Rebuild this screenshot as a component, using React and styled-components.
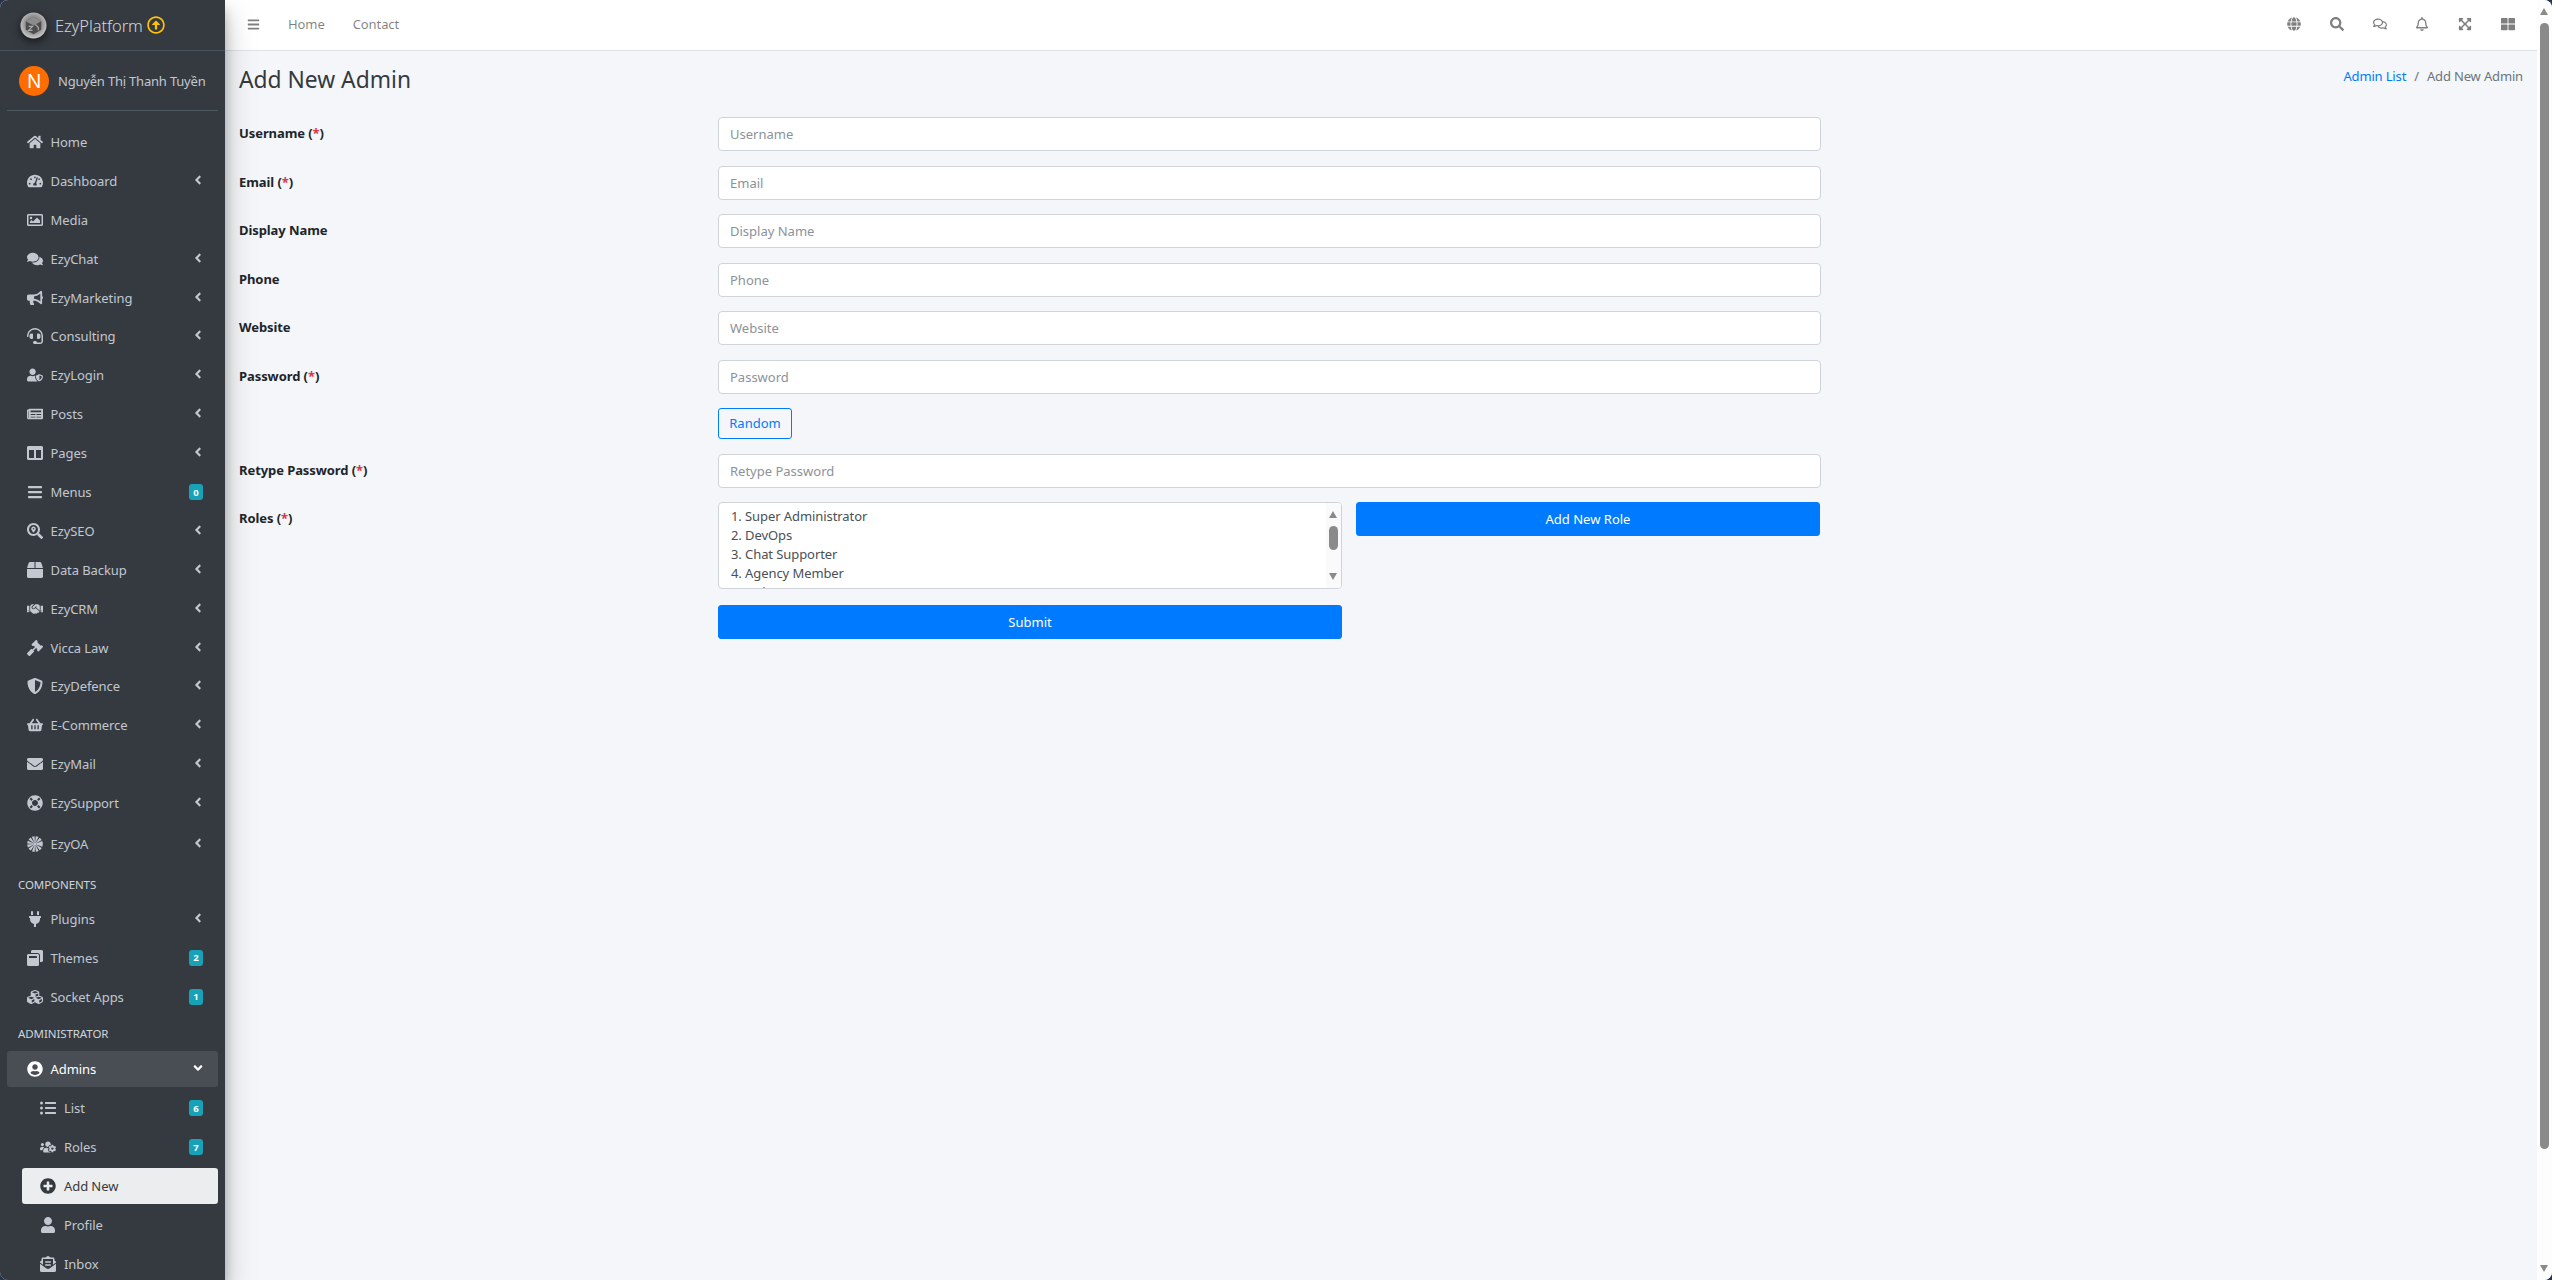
import React from "react";
import styled, { createGlobalStyle } from "styled-components";
import {
  FaHome, FaTachometerAlt, FaRegImage, FaComments, FaBullhorn, FaHeadset, FaUserShield,
  FaNewspaper, FaColumns, FaBars, FaSearchLocation, FaBox, FaHandshake, FaGavel, FaShieldAlt,
  FaShoppingBasket, FaEnvelope, FaLifeRing, FaPlug, FaWindowRestore, FaCubes,
  FaUserCircle, FaListUl, FaUsersCog, FaPlusCircle, FaUser, FaEnvelopeOpenText, FaAngleLeft,
  FaAngleDown, FaGlobe, FaSearch, FaRegComments, FaRegBell, FaExpandArrowsAlt, FaThLarge,
  FaRegArrowAltCircleUp,
} from "react-icons/fa";

const font = `"Noto Sans", "Open Sans", sans-serif`;

const GlobalStyle = createGlobalStyle`
  html, body { margin: 0; height: 100%; overflow: hidden; background: #26344e; }
  body { font-family: ${font}; font-size: 13px; letter-spacing: -.08px; color: #212529; }
  * { box-sizing: border-box; }
`;

const Window = styled.div`
  display: flex;
  width: 2552px;
  height: 1280px;
  overflow: hidden;
  border-radius: 8px;
  background: #f4f6f9;
`;

const Sidebar = styled.aside`
  flex: 0 0 225px;
  height: 1280px;
  overflow: hidden;
  background: #343a40;
  position: relative;
  z-index: 2;
  box-shadow: 0 14px 28px rgba(0, 0, 0, .25), 0 10px 10px rgba(0, 0, 0, .22);
`;

const Brand = styled.div`
  display: flex;
  align-items: center;
  height: 51px;
  padding-left: 20px;
  border-bottom: 1px solid #4b545c;
  color: rgba(255, 255, 255, .8);
  font-size: 16.5px;
  font-weight: 300;
`;

const BrandName = styled.span`
  margin: 0 4px 0 8px;
`;

const UserPanel = styled.div`
  display: flex;
  align-items: center;
  height: 60px;
  margin: 0 7px;
  padding: 0 0 0 12px;
  border-bottom: 1px solid #4f5962;
  color: #c2c7d0;
  letter-spacing: -.2px;
`;

const Avatar = styled.div`
  width: 30px;
  height: 30px;
  border-radius: 50%;
  background: #ff6d00;
  color: #fff;
  font-size: 19px;
  display: flex;
  align-items: center;
  justify-content: center;
  margin-right: 9px;
`;

const Nav = styled.nav`
  padding: 13px 7px 0;
`;

const NavItem = styled.div`
  display: flex;
  align-items: center;
  height: ${p => (p.$tall ? 40 : 36)}px;
  margin-bottom: 2.9px;
  margin-left: ${p => (p.$sub ? 15 : 0)}px;
  padding-left: ${p => (p.$sub ? 14.5 : 16)}px;
  padding-right: 15px;
  border-radius: 3px;
  color: ${p => (p.$current ? "#343a40" : p.$open ? "#fff" : "#c2c7d0")};
  background: ${p => (p.$current ? "#ecedee" : p.$open ? "rgba(255,255,255,.1)" : "transparent")};
`;

const IconSlot = styled.span`
  flex: 0 0 27px;
  display: flex;
  justify-content: center;
  margin-right: 2.5px;
  margin-left: -2px;
  font-size: 16px;
  & svg { width: auto; height: 1em; }
`;

const ItemLabel = styled.span`
  flex: 1;
  white-space: nowrap;
`;

const Badge = styled.span`
  width: 14px;
  height: 16px;
  border-radius: 3px;
  background: #17a2b8;
  color: #fff;
  font-size: 9.5px;
  font-weight: 700;
  display: flex;
  align-items: center;
  justify-content: center;
`;

const Chevron = styled.span`
  display: flex;
  margin: -2px -2px 0 0;
  font-size: 14px;
`;

const NavHeader = styled.div`
  height: 24px;
  margin-top: ${p => p.$top}px;
  margin-bottom: ${p => p.$bottom}px;
  padding-left: 11px;
  font-size: 11.5px;
  color: #d0d4db;
  line-height: 24px;
`;

const Main = styled.div`
  flex: 1;
  min-width: 0;
  display: flex;
  flex-direction: column;
`;

const TopBar = styled.header`
  height: 51px;
  display: flex;
  align-items: center;
  background: #fff;
  border-bottom: 1px solid #dee2e6;
  padding: 0 7.6px 2px 22px;
  color: rgba(0, 0, 0, .5);
`;

const TopLink = styled.span`
  margin-left: ${p => p.$gap}px;
`;

const TopIcons = styled.div`
  margin-left: auto;
  display: flex;
  align-items: center;
`;

const TopIcon = styled.span`
  flex: 0 0 42.8px;
  display: flex;
  justify-content: center;
  font-size: 14px;
  & svg { display: block; width: auto; height: 1em; }
`;

const Content = styled.main`
  padding: 0 14px 0 14px;
`;

const TitleRow = styled.div`
  display: flex;
  justify-content: space-between;
  height: 66px;
`;

const Title = styled.h1`
  margin: 11px 0 0;
  font-size: 22.8px;
  font-weight: 400;
  line-height: 36px;
  letter-spacing: 0;
  color: #343a40;
`;

const Crumbs = styled.div`
  margin-top: 16px;
  color: #6c757d;
  letter-spacing: -.15px;
  & a { color: #007bff; }
  & i { font-style: normal; padding: 0 8px; }
`;

const Row = styled.div`
  display: flex;
  margin-bottom: 14.6px;
`;

const Label = styled.label`
  flex: 0 0 479px;
  font-weight: 700;
  line-height: 32px;
  & em { font-style: normal; color: #dc3545; }
`;

const Field = styled.div`
  width: 1103px;
`;

const Input = styled.input`
  display: block;
  width: 100%;
  height: 34px;
  padding: 0 11px;
  font: 13px ${font};
  color: #495057;
  background: #fff;
  border: 1px solid #ced4da;
  border-radius: 4px;
  &::placeholder { color: #8b9299; opacity: 1; }
`;

const Button = styled.button`
  display: block;
  height: ${p => (p.$outline ? 31 : 34)}px;
  width: ${p => (p.$outline ? "74px" : "100%")};
  margin-top: ${p => (p.$outline ? 14 : 0)}px;
  padding: 0;
  font: 13px ${font};
  color: ${p => (p.$outline ? "#007bff" : "#fff")};
  background: ${p => (p.$outline ? "transparent" : "#007bff")};
  border: 1px solid #007bff;
  border-radius: 3px;
`;

const RoleGrid = styled.div`
  display: grid;
  grid-template-columns: 624px 464px;
  column-gap: 14px;
  align-items: start;
  row-gap: 15.5px;
`;

const RoleBox = styled.div`
  height: 87px;
  overflow: hidden;
  display: flex;
  background: #fff;
  border: 1px solid #ced4da;
  border-radius: 4px;
  color: #495057;
`;

const RoleList = styled.div`
  flex: 1;
  padding: 4px 0 0 12px;
  line-height: 19px;
`;

const MiniBar = styled.div`
  flex: 0 0 15px;
  position: relative;
  background: #fafafa;
`;

const MiniThumb = styled.div`
  position: absolute;
  top: 23px;
  left: 3px;
  width: 9px;
  height: 24px;
  border-radius: 5px;
  background: #8a8a8a;
`;

const Arrow = styled.div`
  position: absolute;
  left: 3px;
  ${p => (p.$up ? "top: 8px;" : "bottom: 8px;")}
  width: 0;
  height: 0;
  border-left: 4.5px solid transparent;
  border-right: 4.5px solid transparent;
  ${p => (p.$up ? "border-bottom" : "border-top")}: 7px solid #8a8a8a;
`;

const PageBar = styled.div`
  flex: 0 0 15px;
  position: relative;
  background: #fdfdfd;
`;

const PageThumb = styled.div`
  position: absolute;
  top: 23px;
  left: 3px;
  width: 9px;
  height: 1126px;
  border-radius: 5px;
  background: #8a8a8a;
`;

const OaIcon = () => (
  <svg viewBox="0 0 16 16" fill="none" stroke="currentColor" strokeWidth="1.5">
    <circle cx="8" cy="8" r="4.6" strokeWidth="6.4" strokeDasharray="1.7 .7" />
    <circle cx="8" cy="8" r="1.6" fill="currentColor" stroke="none" />
  </svg>
);

const nav = [
  [FaHome, "Home"], [FaTachometerAlt, "Dashboard", 1], [FaRegImage, "Media"],
  [FaComments, "EzyChat", 1], [FaBullhorn, "EzyMarketing", 1], [FaHeadset, "Consulting", 1],
  [FaUserShield, "EzyLogin", 1], [FaNewspaper, "Posts", 1], [FaColumns, "Pages", 1],
  [FaBars, "Menus", 0, "0"], [FaSearchLocation, "EzySEO", 1], [FaBox, "Data Backup", 1],
  [FaHandshake, "EzyCRM", 1], [FaGavel, "Vicca Law", 1], [FaShieldAlt, "EzyDefence", 1],
  [FaShoppingBasket, "E-Commerce", 1], [FaEnvelope, "EzyMail", 1], [FaLifeRing, "EzySupport", 1],
];

const components = [
  [FaPlug, "Plugins", 1], [FaWindowRestore, "Themes", 0, "2"], [FaCubes, "Socket Apps", 0, "1"],
];

const subItems = [
  [FaListUl, "List", "6"], [FaUsersCog, "Roles", "7"], [FaPlusCircle, "Add New", null, true],
  [FaUser, "Profile"], [FaEnvelopeOpenText, "Inbox"],
];

const fields = [
  ["Username", "Username", true], ["Email", "Email", true], ["Display Name", "Display Name"],
  ["Phone", "Phone"], ["Website", "Website"],
];

const topIcons = [FaGlobe, FaSearch, FaRegComments, FaRegBell, FaExpandArrowsAlt, FaThLarge];

const Logo = () => (
  <svg width="27" height="27" viewBox="0 0 28 28" style={{ filter: "drop-shadow(0 3px 4px rgba(0,0,0,.6))" }}>
    <defs>
      <radialGradient id="logoBall" cx="50%" cy="45%" r="55%">
        <stop offset="55%" stopColor="#8f8f8f" />
        <stop offset="100%" stopColor="#c9c9c9" />
      </radialGradient>
    </defs>
    <circle cx="14" cy="14" r="13.5" fill="url(#logoBall)" />
    <path d="M14 5l8 4.5v9L14 23l-8-4.5v-9z" fill="#4d4d4d" />
    <path d="M14 5l8 4.5-8 4.5-8-4.5z" fill="#8c8c8c" />
    <path d="M9 15h4l-4 4h4M16 13l3 3v3" fill="none" stroke="#aaa" strokeWidth="1.3" />
  </svg>
);

const MenuRow = ({ icon: Icon, label, arrow, badge, tall }) => (
  <NavItem $tall={tall}>
    <IconSlot><Icon /></IconSlot>
    <ItemLabel>{label}</ItemLabel>
    {badge && <Badge>{badge}</Badge>}
    {arrow ? <Chevron><FaAngleLeft /></Chevron> : null}
  </NavItem>
);

const Required = () => <> (<em>*</em>)</>;

export default function App() {
  return (
    <Window>
      <GlobalStyle />
      <Sidebar>
        <Brand>
          <Logo />
          <BrandName>EzyPlatform</BrandName>
          <FaRegArrowAltCircleUp color="#ffc107" size={18} />
        </Brand>
        <UserPanel>
          <Avatar>N</Avatar>
          Nguyễn Thị Thanh Tuyền
        </UserPanel>
        <Nav>
          {nav.map(([icon, label, arrow, badge]) => (
            <MenuRow key={label} icon={icon} label={label} arrow={arrow} badge={badge} />
          ))}
          <MenuRow icon={OaIcon} label="EzyOA" arrow tall />
          <NavHeader $top={9} $bottom={4}>COMPONENTS</NavHeader>
          {components.map(([icon, label, arrow, badge]) => (
            <MenuRow key={label} icon={icon} label={label} arrow={arrow} badge={badge} />
          ))}
          <NavHeader $top={7.5} $bottom={5}>ADMINISTRATOR</NavHeader>
          <NavItem $open>
            <IconSlot><FaUserCircle /></IconSlot>
            <ItemLabel>Admins</ItemLabel>
            <Chevron><FaAngleDown /></Chevron>
          </NavItem>
          {subItems.map(([Icon, label, badge, current]) => (
            <NavItem key={label} $sub $current={current}>
              <IconSlot><Icon /></IconSlot>
              <ItemLabel>{label}</ItemLabel>
              {badge && <Badge>{badge}</Badge>}
            </NavItem>
          ))}
        </Nav>
      </Sidebar>
      <Main>
        <TopBar>
          <FaBars size={13} />
          <TopLink $gap={28}>Home</TopLink>
          <TopLink $gap={28}>Contact</TopLink>
          <TopIcons>
            {topIcons.map((Icon, i) => <TopIcon key={i}><Icon /></TopIcon>)}
          </TopIcons>
        </TopBar>
        <Content>
          <TitleRow>
            <Title>Add New Admin</Title>
            <Crumbs><a>Admin List</a><i>/</i>Add New Admin</Crumbs>
          </TitleRow>
          {fields.map(([label, ph, req]) => (
            <Row key={label}>
              <Label>{label}{req && <Required />}</Label>
              <Field><Input placeholder={ph} /></Field>
            </Row>
          ))}
          <Row>
            <Label>Password<Required /></Label>
            <Field>
              <Input placeholder="Password" />
              <Button $outline>Random</Button>
            </Field>
          </Row>
          <Row>
            <Label>Retype Password<Required /></Label>
            <Field><Input placeholder="Retype Password" /></Field>
          </Row>
          <Row>
            <Label>Roles<Required /></Label>
            <Field>
              <RoleGrid>
                <RoleBox>
                  <RoleList>
                    <div>1. Super Administrator</div>
                    <div>2. DevOps</div>
                    <div>3. Chat Supporter</div>
                    <div>4. Agency Member</div>
                    <div>5. Writer</div>
                  </RoleList>
                  <MiniBar><Arrow $up /><MiniThumb /><Arrow /></MiniBar>
                </RoleBox>
                <Button>Add New Role</Button>
                <Button>Submit</Button>
              </RoleGrid>
            </Field>
          </Row>
        </Content>
      </Main>
      <PageBar><Arrow $up /><PageThumb /><Arrow /></PageBar>
    </Window>
  );
}
